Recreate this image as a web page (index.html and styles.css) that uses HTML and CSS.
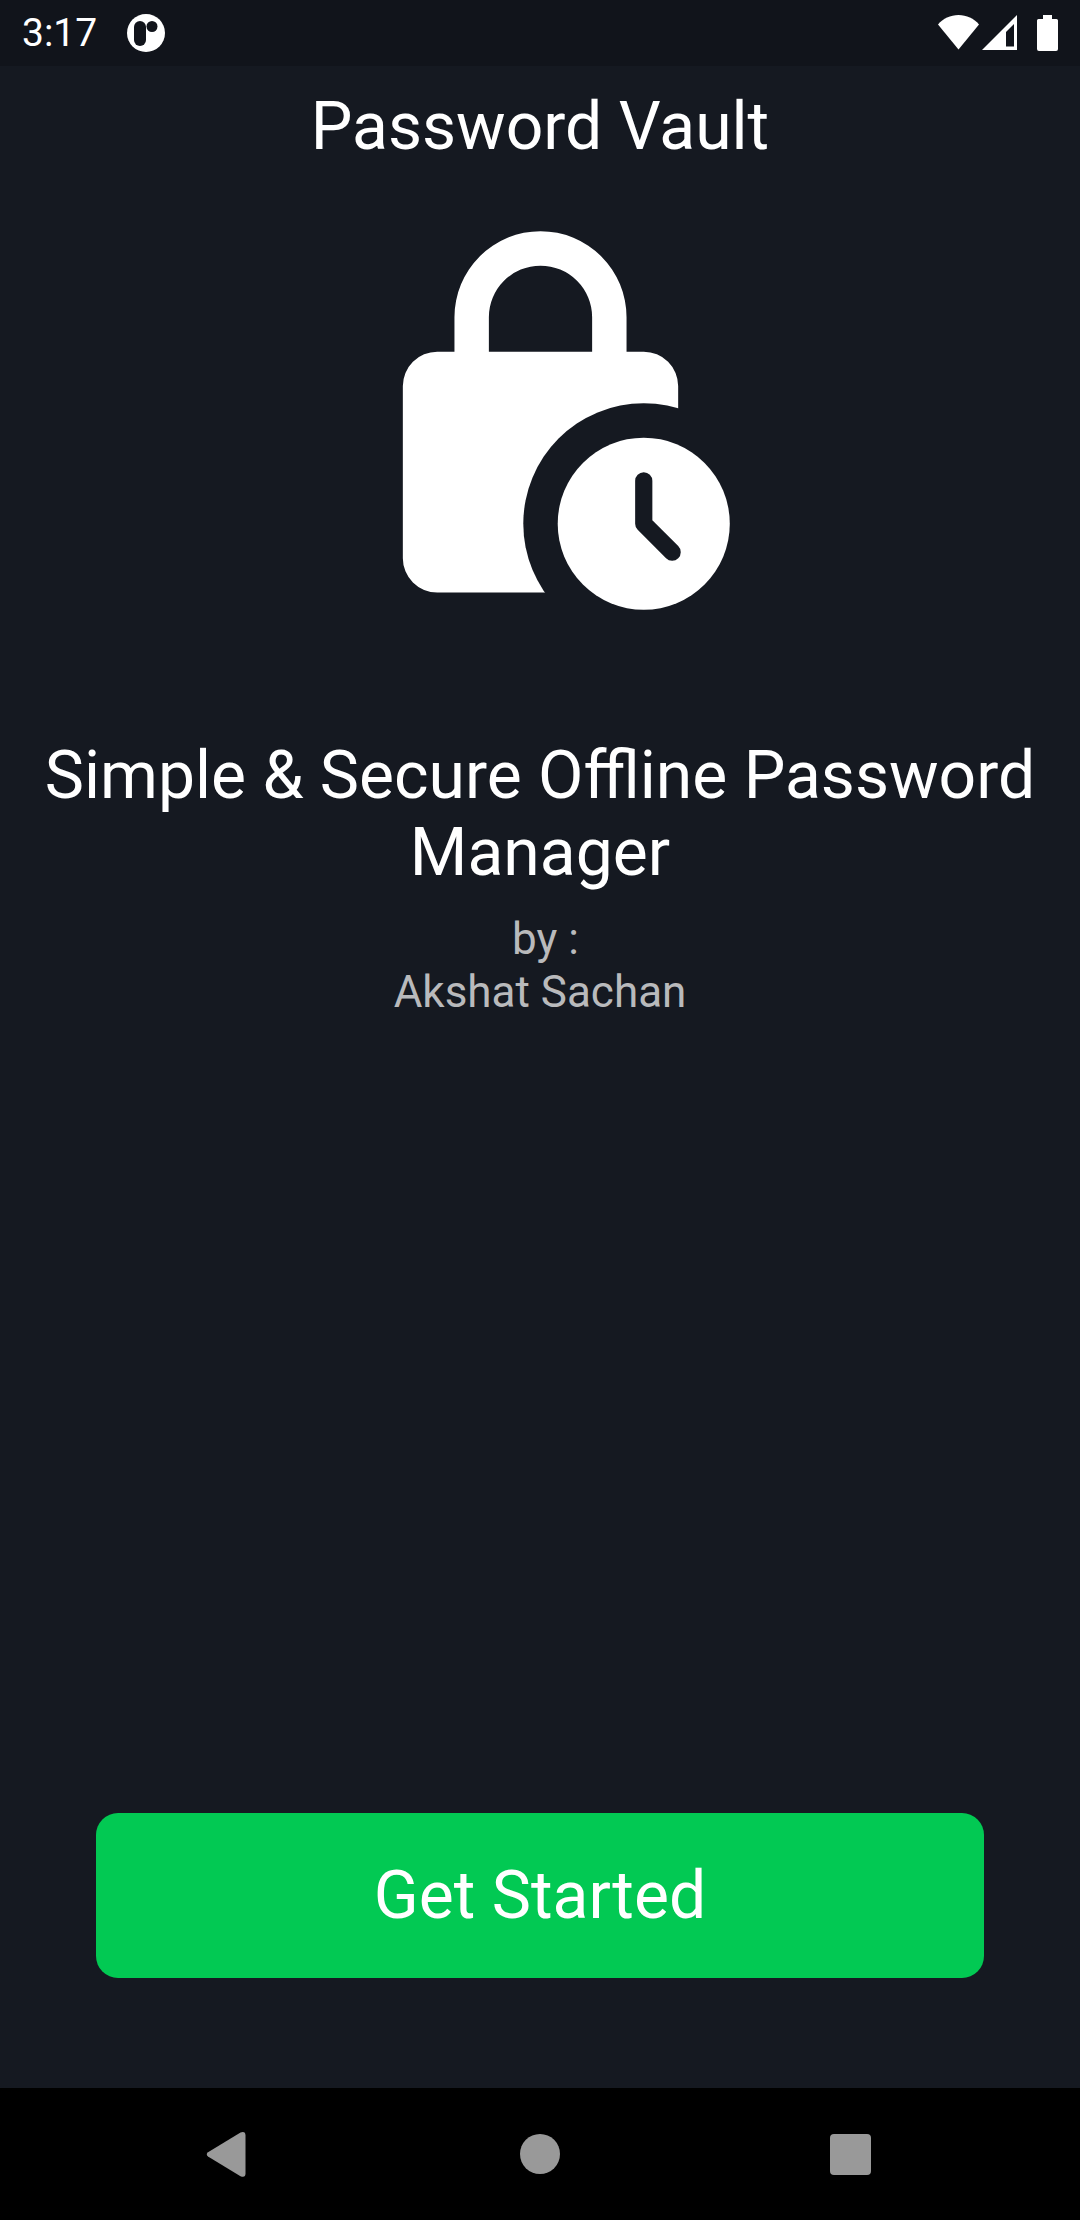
FILE: index.html
```html
<!DOCTYPE html>
<html lang="en">
<head>
  <meta charset="utf-8">
  <meta name="viewport" content="width=device-width, initial-scale=1">
  <title>Password Vault</title>
  <link rel="stylesheet" href="styles.css">
</head>
<body>
  <div class="screen">
    <div class="status-bar">
      <div class="status-left">
        <span class="clock">3:17</span>
        <svg class="notification-icon" width="38" height="38" viewBox="0 0 38 38" aria-hidden="true">
          <circle cx="19" cy="19" r="19" fill="#fff"/>
          <rect class="cutout" x="7" y="7" width="12" height="25" rx="6"/>
          <circle class="cutout" cx="25" cy="12.500" r="5.500"/>
        </svg>
      </div>
      <div class="status-right">
        <svg width="41" height="36" viewBox="0 0 41 36" aria-hidden="true">
          <path d="M20.500 34.500 0 9.500C5 3.500 12.500 0 20.500 0S36 3.500 41 9.500Z" fill="#fff"/>
        </svg>
        <svg class="signal-icon" width="35" height="36" viewBox="0 0 35 36" aria-hidden="true">
          <path d="M35 0V35H0ZM32 9 24 17V31.500H32Z" fill="#fff" fill-rule="evenodd"/>
        </svg>
        <svg class="battery-icon" width="21" height="36" viewBox="0 0 21 36" aria-hidden="true">
          <path d="M6 0h9v4h4.500a1.500 1.500 0 0 1 1.500 1.500V34a2 2 0 0 1-2 2H2a2 2 0 0 1-2-2V5.500A1.500 1.500 0 0 1 1.500 4H6Z" fill="#fff"/>
        </svg>
      </div>
    </div>

    <main class="welcome">
      <h1 class="title">Password Vault</h1>
      <svg class="logo" viewBox="0 0 24 24" aria-hidden="true">
        <defs>
          <mask id="clock-gap">
            <rect width="24" height="24" fill="#fff"/>
            <circle cx="18" cy="18" r="7" fill="#000"/>
          </mask>
        </defs>
        <g mask="url(#clock-gap)" fill="#fff">
          <path d="M7 8V6a5 5 0 0 1 10 0v2h1a2 2 0 0 1 2 2v10a2 2 0 0 1-2 2H6a2 2 0 0 1-2-2V10a2 2 0 0 1 2-2ZM9 8h6V6a3 3 0 0 0-6 0Z" fill-rule="evenodd"/>
        </g>
        <circle cx="18" cy="18" r="5" fill="#fff"/>
        <path class="clock-hands" d="M18 15.500V18l1.650 1.650"/>
      </svg>
      <h2 class="tagline">Simple &amp; Secure Offline Password Manager</h2>
      <p class="author">&nbsp;by :<br>Akshat Sachan</p>
      <button class="start-button" type="button">Get Started</button>
    </main>

    <nav class="nav-bar" aria-label="System">
      <button class="nav-button" type="button" aria-label="Back">
        <svg width="60" height="60" viewBox="0 0 60 60" aria-hidden="true">
          <path d="M9 28.300 41.500 8.500Q46.500 6.800 46.500 11.500V49.500Q46.500 54 41.500 52.200L9 32.500Q6.500 30.400 9 28.300Z" fill="#999"/>
        </svg>
      </button>
      <button class="nav-button" type="button" aria-label="Home">
        <svg width="60" height="60" viewBox="0 0 60 60" aria-hidden="true">
          <circle cx="30" cy="30" r="20" fill="#999"/>
        </svg>
      </button>
      <button class="nav-button" type="button" aria-label="Recent apps">
        <svg width="60" height="60" viewBox="0 0 60 60" aria-hidden="true">
          <rect x="9" y="10" width="41" height="41" rx="4" fill="#999"/>
        </svg>
      </button>
    </nav>
  </div>
</body>
</html>
```

FILE: styles.css
```css
* {
  box-sizing: border-box;
}

body {
  margin: 0;
  background: #151921;
  color: #fff;
  font-family: Roboto, sans-serif;
}

svg {
  display: block;
}

.screen {
  display: flex;
  flex-direction: column;
  min-height: 100vh;
}

.status-bar {
  display: flex;
  align-items: center;
  justify-content: space-between;
  height: 66px;
  padding: 0 22px;
  background: #11141b;
}

.status-left,
.status-right {
  display: flex;
  align-items: center;
}

.status-left {
  gap: 30px;
}

.clock {
  font-size: 39px;
  line-height: 48px;
}

.cutout {
  fill: #11141b;
}

.signal-icon {
  margin-left: 3px;
}

.battery-icon {
  margin-left: 20px;
}

.welcome {
  display: flex;
  flex: 1;
  flex-direction: column;
  align-items: center;
  padding: 22px 22px 110px;
  text-align: center;
}

.title,
.tagline {
  margin: 0;
  font-size: 66px;
  font-weight: 400;
  line-height: 77px;
}

.logo {
  width: 413px;
  margin: 49px 0 110px;
}

.clock-hands {
  fill: none;
  stroke: #151921;
  stroke-width: 1;
  stroke-linecap: round;
  stroke-linejoin: round;
}

.author {
  margin: 22px 0;
  color: #b9babc;
  font-size: 44px;
  line-height: 53px;
}

.start-button {
  align-self: stretch;
  height: 165px;
  margin: auto 74px 0;
  border: 0;
  border-radius: 22px;
  background: #02c953;
  color: #fff;
  font: 400 66px/77px Roboto, sans-serif;
}

.nav-bar {
  display: grid;
  grid-template-columns: repeat(3, 1fr);
  height: 132px;
  padding: 0 73px;
  background: #000;
}

.nav-button {
  display: flex;
  align-items: center;
  justify-content: center;
  padding: 0;
  border: 0;
  background: none;
}
```
